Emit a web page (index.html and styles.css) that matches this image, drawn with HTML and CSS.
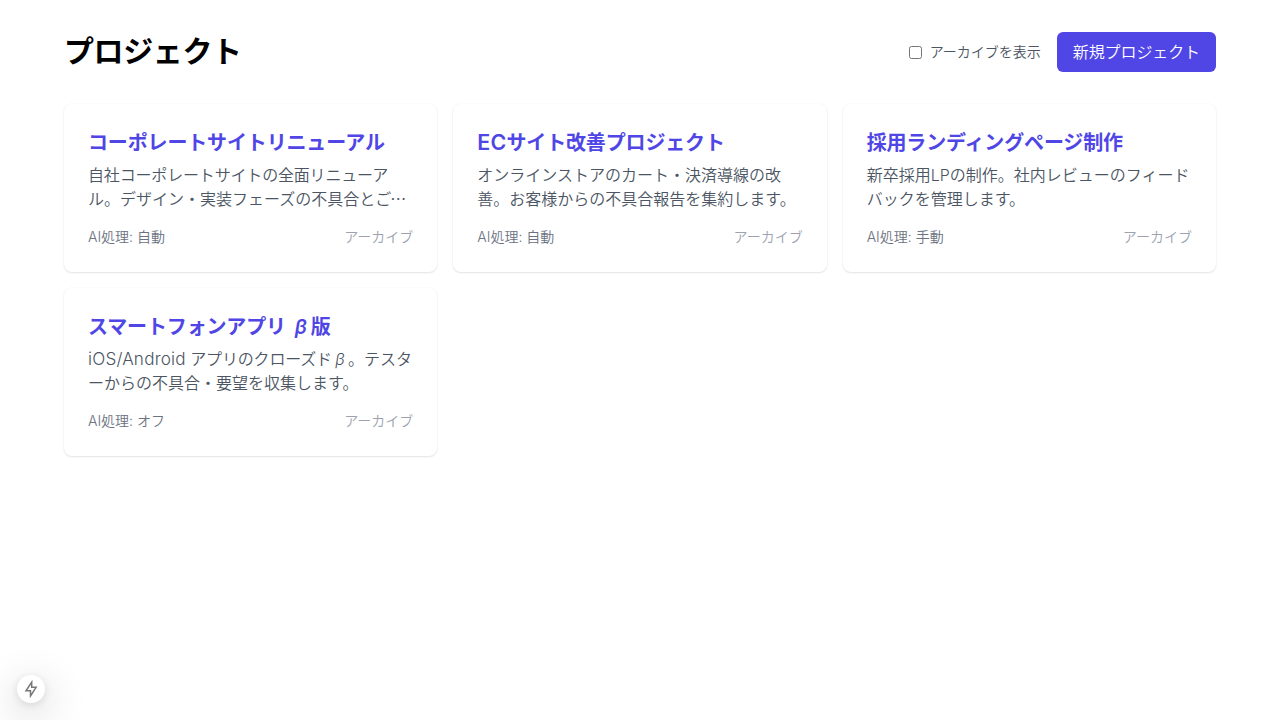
FILE: index.html
```html
<!DOCTYPE html>
<html lang="ja">
<head>
    <meta charset="UTF-8">
    <meta name="viewport" content="width=device-width, initial-scale=1.0">
    <title>プロジェクト</title>
    <link rel="stylesheet" href="styles.css">
</head>
<body>
    <main class="container">
        <div class="header">
            <h1>プロジェクト</h1>
            <div class="actions">
                <label class="toggle">
                    <input type="checkbox">
                    <span>アーカイブを表示</span>
                </label>
                <a href="#" class="new-button">新規プロジェクト</a>
            </div>
        </div>

        <div class="projects">
            <div class="card">
                <a href="#" class="card-title">コーポレートサイトリニューアル</a>
                <p class="card-text"><span class="tight">自社コーポレートサイトの全面リニューア</span>ル。デザイン・実装フェーズの不具合と<span class="ellipsis">ご…</span></p>
                <div class="card-footer">
                    <span>AI処理: 自動</span>
                    <button class="archive">アーカイブ</button>
                </div>
            </div>
            <div class="card">
                <a href="#" class="card-title"><span class="latin">EC</span>サイト改善プロジェクト</a>
                <p class="card-text">オンラインストアのカート・決済導線の改善。お客様からの不具合報告を集約します。</p>
                <div class="card-footer">
                    <span>AI処理: 自動</span>
                    <button class="archive">アーカイブ</button>
                </div>
            </div>
            <div class="card">
                <a href="#" class="card-title">採用ランディングページ制作</a>
                <p class="card-text">新卒採用LPの制作。社内レビューのフィードバックを管理します。</p>
                <div class="card-footer">
                    <span>AI処理: 手動</span>
                    <button class="archive">アーカイブ</button>
                </div>
            </div>
            <div class="card">
                <a href="#" class="card-title">スマートフォンアプリ <i class="beta">β</i>版</a>
                <p class="card-text"><span class="latin">iOS/Android</span> <span class="tight">アプリのクローズド</span><i class="beta">β</i>。テスターからの不具合・要望を収集します。</p>
                <div class="card-footer">
                    <span>AI処理: オフ</span>
                    <button class="archive">アーカイブ</button>
                </div>
            </div>
        </div>
    </main>

    <div class="indicator">
        <svg width="14" height="18" viewBox="0 0 14 18" fill="none" stroke="#777" stroke-width="1.5">
            <path d="M7.7 2.2 L2 10.8 H6.5 V16 L12.1 7.3 H7.7 Z"/>
        </svg>
    </div>
</body>
</html>
```

FILE: styles.css
```css
* {
    box-sizing: border-box;
}

body {
    margin: 0;
    background-color: white;
    color: black;
    font-family: Inter, "Noto Sans CJK JP", sans-serif;
    font-size: 16px;
    font-weight: 350;
    line-height: 24px;
}

.container {
    padding: 32px 64px;
}

.header {
    display: flex;
    justify-content: space-between;
    align-items: center;
    margin-bottom: 32px;
}

h1 {
    margin: 0 0 2px;
    font-size: 30px;
    font-weight: 700;
    line-height: 36px;
    letter-spacing: -0.4px;
}

.actions {
    display: flex;
    align-items: center;
    gap: 16px;
}

.toggle {
    display: flex;
    align-items: center;
    gap: 8px;
    color: #4b5563;
    font-size: 14px;
    line-height: 20px;
}

.toggle input {
    width: 13px;
    height: 13px;
    margin: 0;
}

.new-button {
    padding: 8px 16px;
    background-color: #4f46e5;
    border-radius: 6px;
    color: white;
    text-decoration: none;
    letter-spacing: -0.1px;
}

.projects {
    display: grid;
    grid-template-columns: repeat(3, minmax(0, 1fr));
    gap: 16px;
}

.card {
    padding: 25px 24px;
    background-color: white;
    border-radius: 8px;
    box-shadow: 0 1px 2px 0 rgba(0, 0, 0, 0.1), 0 0 2px 0 rgba(0, 0, 0, 0.06);
}

.card-title {
    display: block;
    color: #4f46e5;
    font-size: 20px;
    font-weight: 600;
    line-height: 28px;
    letter-spacing: -0.15px;
    text-decoration: none;
}

.card-text {
    margin: 6px 0 0;
    color: #4b5563;
}

.latin {
    font-size: 1.07em;
    line-height: 1;
    letter-spacing: 0.2px;
}

.tight {
    letter-spacing: -0.17px;
}

.ellipsis {
    font-family: "Noto Sans CJK JP", sans-serif;
    line-height: 1;
    letter-spacing: -1px;
}

.beta {
    display: inline-block;
    width: 1em;
    line-height: 1;
    text-align: center;
}

.card-footer {
    display: flex;
    justify-content: space-between;
    margin-top: 16px;
    color: #6b7280;
    font-size: 14px;
    line-height: 20px;
}

.archive {
    padding: 0;
    border: 0;
    background: none;
    color: #9ca3af;
    font: inherit;
    cursor: pointer;
}

/* bottom left badge */
.indicator {
    position: fixed;
    left: 17px;
    bottom: 17px;
    display: flex;
    justify-content: center;
    align-items: center;
    width: 28px;
    height: 28px;
    background-color: white;
    border-radius: 50%;
    box-shadow: 0 11px 40px 0 rgba(0, 0, 0, 0.25), 0 2px 10px 0 rgba(0, 0, 0, 0.12);
}
```
